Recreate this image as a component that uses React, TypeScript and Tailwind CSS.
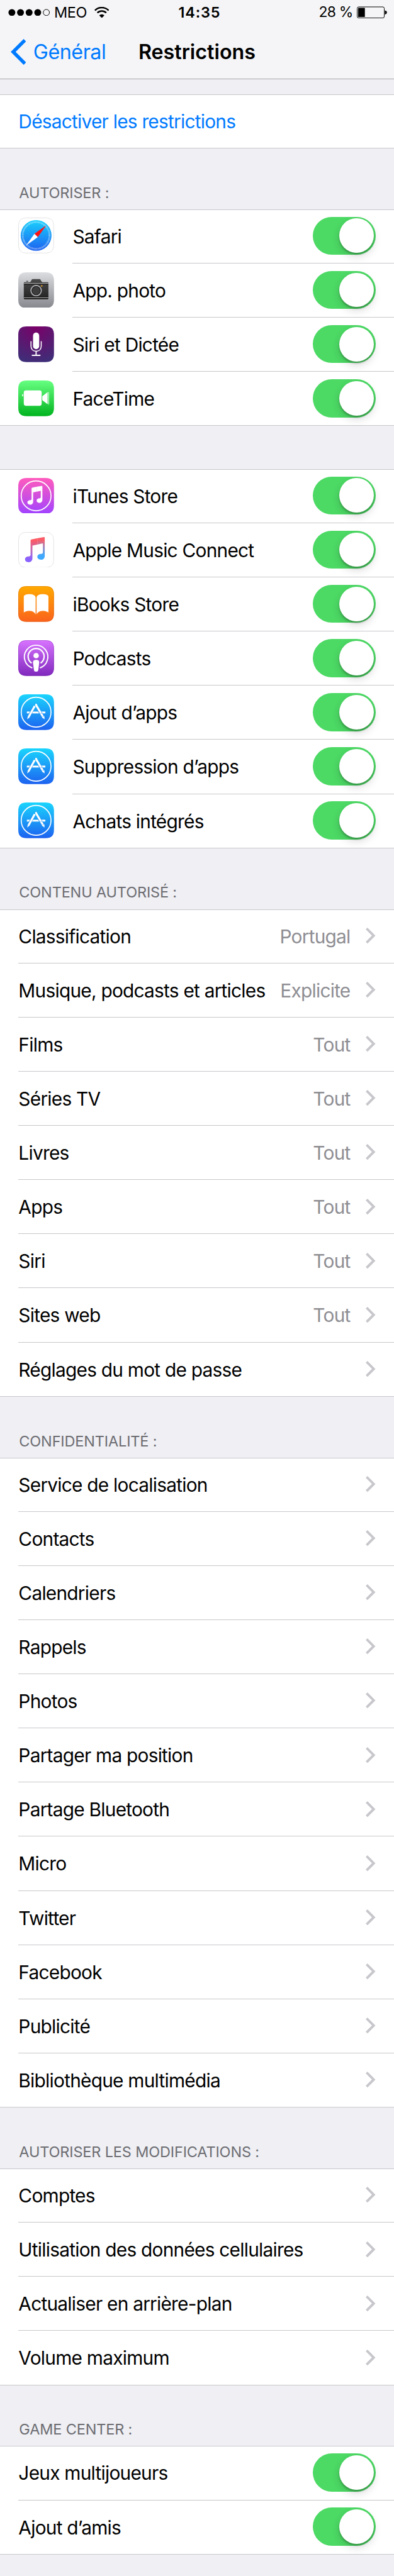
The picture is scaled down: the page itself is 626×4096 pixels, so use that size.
import React from "react";

type IconName = "safari" | "camera" | "siri" | "facetime" | "itunes" | "music" | "ibooks" | "podcasts" | "appstore";

const TILE = "M14 0H44C54 0 58 4 58 14V44C58 54 54 58 44 58H14C4 58 0 54 0 44V14C0 4 4 0 14 0Z";
const TILE_EDGE = "M14 .5H44C53.5 .5 57.5 4.5 57.5 14V44C57.5 53.5 53.5 57.5 44 57.5H14C4.500 57.5 .5 53.5 .5 44V14C.5 4.5 4.500 .5 14 .5Z";
const NOTE_LEFT =
  "M20 13.600Q20 12.300 21.400 12L31.500 10V20.200L23 22V42.500C23 46.500 20.500 49 17 49S11 47 11 44.200S13.500 39.500 17 39.500Q20 39.500 20 37Z";
const NOTE_RIGHT =
  "M31.500 10 41.600 8.200Q43 8 43 9.300V38.500C43 42.500 40.500 45 37 45S31 43 31 40.200S33.500 35.500 37 35.500Q40 35.500 40 33V18.400L31.500 20.200Z";

const GRADIENTS: { id: string; stops: [string, string][] }[] = [
  { id: "g-compass", stops: [["0", "#19d0fc"], ["1", "#1e62f0"]] },
  { id: "g-camera", stops: [["0", "#dcdde0"], ["1", "#86888e"]] },
  { id: "g-body", stops: [["0", "#4a4a4a"], ["1", "#222222"]] },
  { id: "g-facetime", stops: [["0", "#67ff81"], ["1", "#01b41f"]] },
  { id: "g-itunes", stops: [["0", "#ff5bbd"], ["1", "#a243ff"]] },
  { id: "g-ibooks", stops: [["0", "#ffaa00"], ["1", "#fa621c"]] },
  { id: "g-podcasts", stops: [["0", "#d873ff"], ["1", "#8029bd"]] },
  { id: "g-appstore", stops: [["0", "#1ad5fd"], ["1", "#1d62f0"]] },
];

function Defs() {
  return (
    <svg className="absolute size-0" aria-hidden="true">
      <defs>
        {GRADIENTS.map((g) => (
          <linearGradient key={g.id} id={g.id} x1="0" y1="0" x2="0" y2="1">
            {g.stops.map(([offset, color]) => (
              <stop key={offset} offset={offset} stopColor={color} />
            ))}
          </linearGradient>
        ))}
        <radialGradient id="g-siri" cx="0.5" cy="0" r="1.1">
          <stop offset="0" stopColor="#7b0068" />
          <stop offset="1" stopColor="#3a3179" />
        </radialGradient>
        <linearGradient id="g-note-left" gradientUnits="userSpaceOnUse" x1="12" y1="0" x2="12" y2="58">
          <stop offset="0.22" stopColor="#ff5a63" />
          <stop offset="0.5" stopColor="#c069b4" />
          <stop offset="0.75" stopColor="#8a62ff" />
        </linearGradient>
        <linearGradient id="g-note-right" gradientUnits="userSpaceOnUse" x1="12" y1="0" x2="12" y2="58">
          <stop offset="0.22" stopColor="#fa5d68" />
          <stop offset="0.42" stopColor="#a386bd" />
          <stop offset="0.65" stopColor="#3fa9ff" />
        </linearGradient>
      </defs>
    </svg>
  );
}

function Glyph({ name }: { name: IconName }) {
  switch (name) {
    case "safari":
      return (
        <>
          <path d={TILE} fill="#fff" />
          <path d={TILE_EDGE} fill="none" stroke="#e2e2e4" />
          <circle cx="29" cy="29" r="25" fill="url(#g-compass)" />
          <circle cx="29" cy="29" r="21.700" fill="none" stroke="#fff" strokeOpacity="0.75" strokeWidth="2.8" strokeDasharray="0.75 1.144" />
          <path d="M45.500 12.500 26.300 26.300 31.700 31.700Z" fill="#ff1414" />
          <path d="M12.500 45.500 26.300 26.300 31.700 31.700Z" fill="#fff" />
        </>
      );
    case "camera":
      return (
        <>
          <path d={TILE} fill="url(#g-camera)" />
          <path d="M9 17.500C9 16.400 9.500 16 10.500 16H19C20.300 15.600 21 13.500 21.700 12.300C22.300 11.200 23 11 24 11H34C35 11 35.700 11.200 36.300 12.300C37 13.500 37.700 15.600 39 16H47.500C48.500 16 49 16.400 49 17.500V42C49 43.500 48.500 44 47.500 44H10.500C9.500 44 9 43.500 9 42Z" fill="url(#g-body)" />
          <path d="M13 14.500H16" stroke="#111" strokeWidth="1" />
          <path d="M9 18.300H49M9 40.800H49" stroke="#f4f4f4" strokeWidth="1" />
          <path d="M9 19.300H49M9 39.800H49" stroke="#000" strokeWidth="1" />
          <circle cx="29" cy="29.700" r="8.400" fill="#2c2c2c" stroke="#b9babe" strokeWidth="1.7" />
          <circle cx="29" cy="29.700" r="6.700" fill="#3d3d3d" stroke="#1b1b1b" strokeWidth="0.8" />
          <rect x="37" y="21" width="2.200" height="2" fill="#f5a623" />
        </>
      );
    case "siri":
      return (
        <>
          <path d={TILE} fill="url(#g-siri)" />
          <rect x="24" y="10" width="10" height="27" rx="5" fill="#fff" />
          <path d="M20.700 24V32C20.700 37 24 40.300 29 40.300S37.300 37 37.300 32V24" fill="none" stroke="#fff" strokeWidth="1.6" />
          <path d="M29 40V47M22 47H36" fill="none" stroke="#fff" strokeWidth="1.900" />
        </>
      );
    case "facetime":
      return (
        <>
          <path d={TILE} fill="url(#g-facetime)" />
          <rect x="9" y="16" width="29" height="25" rx="3.500" fill="#fff" />
          <path d="M39 25.500 47.700 19V38.500L39 32Z" fill="#fff" />
          <path d="M49.300 19V39" stroke="#fff" strokeWidth="1" />
          <path d="M7.800 22C6.500 22 6.200 23 6.200 24S6.500 26 7.800 26Z" fill="#fff" />
        </>
      );
    case "itunes":
      return (
        <>
          <path d={TILE} fill="url(#g-itunes)" />
          <circle cx="29" cy="29" r="24.200" fill="none" stroke="#fff" strokeWidth="1.700" />
          <g transform="translate(6.750 7) scale(0.750 0.740)" fill="#fff" stroke="#fff" strokeWidth="0.500">
            <path d={NOTE_LEFT} />
            <path d={NOTE_RIGHT} />
          </g>
        </>
      );
    case "music":
      return (
        <>
          <path d={TILE} fill="#fff" />
          <path d={TILE_EDGE} fill="none" stroke="#e2e2e4" />
          <path d={NOTE_LEFT} fill="url(#g-note-left)" />
          <path d={NOTE_RIGHT} fill="url(#g-note-right)" />
        </>
      );
    case "ibooks":
      return (
        <>
          <path d={TILE} fill="url(#g-ibooks)" />
          <path d={TILE_EDGE} fill="none" stroke="#c85a10" strokeOpacity="0.35" />
          <path d="M9 17C9 14.500 13.500 13 18 13C24 13 28.200 15 28.200 19V46C27.500 43.500 24 40 18 40C13.500 40 10.500 41.500 9 43Z" fill="#fff" />
          <path d="M49 17C49 14.500 44.500 13 40 13C34 13 29.800 15 29.800 19V46C30.500 43.500 34 40 40 40C44.500 40 47.500 41.500 49 43Z" fill="#fff" />
        </>
      );
    case "podcasts":
      return (
        <>
          <path d={TILE} fill="url(#g-podcasts)" />
          <path d={TILE_EDGE} fill="none" stroke="#6a1ba0" strokeOpacity="0.35" />
          <path d="M22.800 45A19 19 0 1 1 35.200 45" fill="none" stroke="#fff" strokeWidth="2" />
          <path d="M21.800 37.200A13 13 0 1 1 36.200 37.200" fill="none" stroke="#fff" strokeWidth="2.200" />
          <circle cx="29" cy="25" r="4.400" fill="#fff" />
          <path d="M24 36.500C24 33.200 25.500 32 29 32S34 33.200 34 36.500L32.600 48C32.200 50.500 31.300 51 29 51S25.800 50.500 25.400 48Z" fill="#fff" />
        </>
      );
    case "appstore":
      return (
        <>
          <path d={TILE} fill="url(#g-appstore)" />
          <circle cx="29" cy="29" r="24.200" fill="none" stroke="#fff" strokeWidth="1.700" />
          <path d="M14 28H44V31H14Z" fill="#fff" />
          <path d="M24 23 16.500 38" stroke="#2493f5" strokeWidth="4.600" />
          <path d="M32.500 24 40 37" stroke="#2493f5" strokeWidth="4.600" />
          <path d="M26.800 19 17 36.500" stroke="#fff" strokeWidth="3.200" />
          <path d="M15.600 35.500 18.600 37.300 14.500 40.700Z" fill="#fff" />
          <path d="M29 17.500 40.500 37" stroke="#fff" strokeWidth="3.200" strokeLinecap="round" />
          <path d="M36.300 31.300 39.300 29.700M39.500 36.500 42.500 35" stroke="#2180f3" strokeWidth="0.7" />
          <path d="M38.600 37.500 42.300 35.300 42.700 40.500Z" fill="#fff" />
          <path d="M28 18.500 27.500 15.800 29.300 15 31 17.200Z" fill="#fff" />
        </>
      );
  }
}

function AppIcon({ name }: { name: IconName }) {
  return (
    <svg viewBox="0 0 58 58" className="mr-[30px] size-[58px] shrink-0" aria-hidden="true">
      <Glyph name={name} />
    </svg>
  );
}

function Toggle() {
  return (
    <span className="flex h-[62px] w-[102px] shrink-0 items-center justify-end rounded-full bg-[#4cd964] pr-[3px]">
      <span className="size-[56px] rounded-full bg-white shadow-[0_6px_14px_rgba(0,0,0,0.14),0_3px_3px_rgba(0,0,0,0.22)]" />
    </span>
  );
}

function Chevron() {
  return (
    <svg viewBox="0 0 16 26" className="ml-[25px] h-[26px] w-[16px] shrink-0" aria-hidden="true">
      <path d="M1.500 1.500 13 13 1.500 24.500" fill="none" stroke="#c7c7cc" strokeWidth="4" />
    </svg>
  );
}

type RowData = { label: string; icon?: IconName; value?: string; toggle?: boolean; link?: boolean };

function Row({ row, first, last }: { row: RowData; first: boolean; last: boolean }) {
  const inset = row.icon ? "left-[118px]" : "left-[30px]";
  return (
    <li
      className={`relative flex items-center pr-[30px] pl-[30px] text-[30.5px] leading-[40px] tracking-[-0.78px] whitespace-nowrap ${
        first ? "h-[87px] pb-[3px]" : "h-[88px] pb-[2px]"
      }`}
    >
      {row.icon && <AppIcon name={row.icon} />}
      <span className={`flex-1 pt-[3px] ${row.link ? "text-[#007aff]" : "text-black"}`}>{row.label}</span>
      {row.toggle && <Toggle />}
      {row.value && <span className="pt-[3px] text-[#8e8e93]">{row.value}</span>}
      {!row.toggle && !row.link && <Chevron />}
      <span className={`absolute right-0 bottom-0 border-b border-[#c8c7cc] ${last ? "left-0" : inset}`} />
    </li>
  );
}

function Group({ title, rows, gap }: { title?: string; rows: RowData[]; gap: string }) {
  return (
    <section>
      <div className={`flex items-end pb-[11px] pl-[31px] ${gap}`}>
        {title && (
          <h2 className="text-[24px] leading-[32px] tracking-[-0.15px] whitespace-nowrap text-[#6d6d72]">{title}</h2>
        )}
      </div>
      <ul className="border-t border-[#c8c7cc] bg-white">
        {rows.map((row, i) => (
          <Row key={row.label} row={row} first={i === 0} last={i === rows.length - 1} />
        ))}
      </ul>
    </section>
  );
}

const toggles = (items: [string, IconName?][]): RowData[] => items.map(([label, icon]) => ({ label, icon, toggle: true }));
const links = (items: [string, string?][]): RowData[] => items.map(([label, value]) => ({ label, value }));

const GROUPS: { title?: string; gap: string; rows: RowData[] }[] = [
  { gap: "h-[24px]", rows: [{ label: "Désactiver les restrictions", link: true }] },
  {
    title: "AUTORISER :",
    gap: "h-[99px]",
    rows: toggles([["Safari", "safari"], ["App. photo", "camera"], ["Siri et Dictée", "siri"], ["FaceTime", "facetime"]]),
  },
  {
    gap: "h-[70px]",
    rows: toggles([
      ["iTunes Store", "itunes"],
      ["Apple Music Connect", "music"],
      ["iBooks Store", "ibooks"],
      ["Podcasts", "podcasts"],
      ["Ajout d’apps", "appstore"],
      ["Suppression d’apps", "appstore"],
      ["Achats intégrés", "appstore"],
    ]),
  },
  {
    title: "CONTENU AUTORISÉ :",
    gap: "h-[99px]",
    rows: links([
      ["Classification", "Portugal"],
      ["Musique, podcasts et articles", "Explicite"],
      ["Films", "Tout"],
      ["Séries TV", "Tout"],
      ["Livres", "Tout"],
      ["Apps", "Tout"],
      ["Siri", "Tout"],
      ["Sites web", "Tout"],
      ["Réglages du mot de passe"],
    ]),
  },
  {
    title: "CONFIDENTIALITÉ :",
    gap: "h-[99px]",
    rows: links([
      ["Service de localisation"],
      ["Contacts"],
      ["Calendriers"],
      ["Rappels"],
      ["Photos"],
      ["Partager ma position"],
      ["Partage Bluetooth"],
      ["Micro"],
      ["Twitter"],
      ["Facebook"],
      ["Publicité"],
      ["Bibliothèque multimédia"],
    ]),
  },
  {
    title: "AUTORISER LES MODIFICATIONS :",
    gap: "h-[99px]",
    rows: links([
      ["Comptes"],
      ["Utilisation des données cellulaires"],
      ["Actualiser en arrière-plan"],
      ["Volume maximum"],
    ]),
  },
  { title: "GAME CENTER :", gap: "h-[99px]", rows: toggles([["Jeux multijoueurs"], ["Ajout d’amis"]]) },
];

function StatusBar() {
  return (
    <div className="grid h-[40px] grid-cols-3 items-center text-[24px] leading-[40px] whitespace-nowrap text-black">
      <div className="flex items-center pl-[13px]">
        <svg viewBox="0 0 68 12" className="mr-[7px] h-[12px] w-[68px]" aria-hidden="true">
          {[6, 20, 34, 48].map((cx) => (
            <circle key={cx} cx={cx} cy="6" r="5.600" />
          ))}
          <circle cx="62" cy="6" r="5" fill="none" stroke="#000" />
        </svg>
        <span className="tracking-[-0.5px]">MEO</span>
        <svg viewBox="0 0 24 18" className="ml-[12px] h-[18px] w-[24px]" aria-hidden="true">
          <path d="M.9 5.700A15.700 15.700 0 0 1 23.100 5.700" fill="none" stroke="#000" strokeWidth="2.600" />
          <path d="M4.800 9.600A10.200 10.200 0 0 1 19.200 9.600" fill="none" stroke="#000" strokeWidth="2.600" />
          <path d="M12 18 7.800 13.700A6 6 0 0 1 16.200 13.700Z" />
        </svg>
      </div>
      <div className="pl-[8px] text-center font-semibold tracking-[0.8px]">14:35</div>
      <div className="flex items-center justify-end pr-[11px]">
        <span className="text-[23.5px] tracking-[-0.9px]">28 %</span>
        <svg viewBox="0 0 49 20" className="ml-[7px] h-[20px] w-[49px]" aria-hidden="true">
          <rect x="0.500" y="1" width="44" height="18" rx="2.500" fill="none" stroke="#000" />
          <rect x="2" y="2.500" width="11" height="15" rx="0.500" />
          <path d="M45.500 7C47.500 7 48.800 8 48.800 10S47.500 13.200 45.500 13.200Z" />
        </svg>
      </div>
    </div>
  );
}

export default function App() {
  return (
    <div className="relative flex h-[4186px] w-[639.6px] flex-col overflow-hidden bg-[#efeff4] [zoom:0.97873] [font-family:Inter,'Liberation_Sans',sans-serif]">
      <Defs />
      <header className="h-[129px] shrink-0 border-b border-[#a7a7ab] bg-[#f5f5f7]">
        <StatusBar />
        <nav className="grid h-[88px] grid-cols-[200px_1fr_200px] items-center text-[33px] leading-[44px] whitespace-nowrap">
          <div className="flex items-center pl-[17px] text-[#007aff]">
            <svg viewBox="0 0 25 42" className="mr-[12px] h-[42px] w-[25px]" aria-hidden="true">
              <path d="M23 2 4 21 23 40" fill="none" stroke="currentColor" strokeWidth="5.600" />
            </svg>
            <span className="tracking-[-0.5px]">Général</span>
          </div>
          <h1 className="text-center font-semibold">Restrictions</h1>
        </nav>
      </header>
      <main>
        {GROUPS.map((g, i) => (
          <Group key={i} title={g.title} gap={g.gap} rows={g.rows} />
        ))}
      </main>
    </div>
  );
}
